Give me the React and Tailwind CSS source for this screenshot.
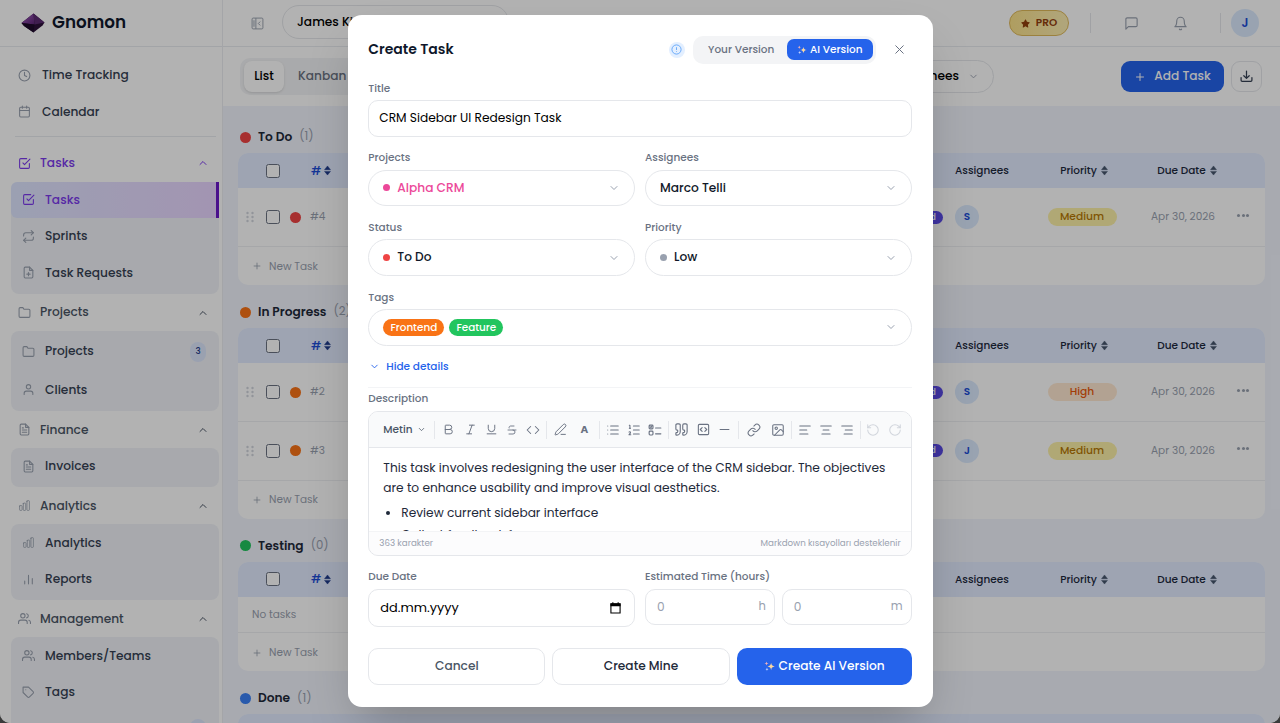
import React from "react";
import {
  FiBell,
  FiCalendar,
  FiCheckSquare,
  FiChevronDown,
  FiChevronUp,
  FiClock,
  FiFilePlus,
  FiFileText,
  FiFolder,
  FiMessageSquare,
  FiPlus,
  FiRepeat,
  FiTag,
  FiUser,
  FiUsers,
  FiX,
} from "react-icons/fi";
import { FaStar } from "react-icons/fa";
import { HiOutlineChartBar } from "react-icons/hi2";
import {
  Bold,
  Code,
  Image as ImageIcon,
  Italic,
  Link as LinkIcon,
  List,
  ListOrdered,
  Minus,
  PenLine,
  Quote,
  RotateCcw,
  RotateCw,
  Strikethrough,
  TextAlignCenter,
  TextAlignEnd,
  TextAlignStart,
  Underline,
} from "lucide-react";

const Logo = () => (
  <svg viewBox="0 0 24 20" className="w-6 h-5">
    <defs>
      <linearGradient id="gem" x1="0" y1="0" x2="1" y2="1">
        <stop offset="0" stopColor="#a55fc4" />
        <stop offset="1" stopColor="#5a2473" />
      </linearGradient>
    </defs>
    <path d="M12.500.5 23.500 9.500 21.500 12.500 12.500 19.500 3 13 .5 10Z" fill="#2c1038" />
    <path d="M12.500.5 13.500 11.500.5 10Z" fill="url(#gem)" />
    <path d="M12.500.5 23.500 9.500 13.500 11.500Z" fill="#5b2a72" />
    <path d="M.5 10 13.500 11.500 12.500 19.500 3 13Z" fill="#1d0b2a" />
  </svg>
);

const ReportsIcon = ({ className }) => (
  <svg viewBox="0 0 24 24" fill="none" stroke="currentColor" strokeWidth="2" strokeLinecap="round" className={className}>
    <path d="M5 20v-5M12 20V4M19 20V10" />
  </svg>
);

const Sparkles = ({ className }) => (
  <svg viewBox="0 0 24 24" className={className}>
    <path d="M15.500 4c.8 5.300 2.400 7.100 8 8-5.600.9-7.200 2.700-8 8-.8-5.300-2.400-7.100-8-8 5.600-.9 7.200-2.700 8-8Z" fill="#fcd9a0" />
    <path d="M5.500 1c.5 3 1.500 4 4.500 4.500C7 6 6 7 5.500 10 5 7 4 6 1 5.500 4 5 5 4 5.500 1Z" fill="#f3b2b8" />
    <path d="M6.500 14c.4 2.800 1.200 3.700 4 4.200-2.800.5-3.600 1.400-4 4.200-.4-2.800-1.200-3.700-4-4.200 2.800-.5 3.600-1.400 4-4.200Z" fill="#c4d4ff" />
  </svg>
);

const SortIcon = ({ className }) => (
  <svg viewBox="0 0 8 12" className={`w-[7px] h-[11px] ${className}`} fill="currentColor">
    <path d="M4 .8 7.400 5H.6ZM4 11.200.6 7h6.800Z" stroke="currentColor" strokeWidth=".5" strokeLinejoin="round" />
  </svg>
);

const PanelIcon = () => (
  <svg viewBox="0 0 24 24" className="w-[13px] h-[13px] text-gray-400" fill="none" stroke="currentColor" strokeWidth="1.800">
    <rect x="2" y="2" width="20" height="20" rx="2" />
    <path d="M9 2v20M5.500 6v12M17 8.500 13.500 12l3.500 3.500" />
  </svg>
);

const DownloadIcon = () => (
  <svg viewBox="0 0 24 24" className="w-[13px] h-[13px] text-gray-700" fill="none" stroke="currentColor" strokeWidth="2.300" strokeLinecap="round" strokeLinejoin="round">
    <path d="M2 14v5a2 2 0 0 0 2 2h16a2 2 0 0 0 2-2v-5M12 2v13M7 10.500l5 5 5-5" />
  </svg>
);

const TaskListIcon = ({ className }) => (
  <svg viewBox="0 0 24 24" className={className} fill="none" stroke="currentColor" strokeWidth="2" strokeLinecap="round">
    <rect x="2" y="3.500" width="6.500" height="6.500" rx="1.500" />
    <rect x="2" y="14" width="6.500" height="6.500" rx="1.500" />
    <path d="m4 6.700 1 1 1.500-2M13 8.500h9M13 18.500h9" />
  </svg>
);

const CodeBlockIcon = ({ className }) => (
  <svg viewBox="0 0 24 24" className={className} fill="none" stroke="currentColor" strokeWidth="2" strokeLinecap="round" strokeLinejoin="round">
    <rect x="2.500" y="2.500" width="19" height="19" rx="2" />
    <path d="m9.500 8.500-3.500 3.500 3.500 3.500M14.500 8.500l3.500 3.500-3.500 3.500" />
  </svg>
);

const CalendarGlyph = () => (
  <svg viewBox="0 0 12 13" className="w-[11px] h-3">
    <path d="M1 2h10v10H1Z" fill="none" stroke="#000" strokeWidth="1.200" />
    <path d="M.5 1.500h11V4.500H.5ZM2.500.3h1.200v2H2.500ZM8.300.3h1.200v2H8.300Z" fill="#000" />
  </svg>
);

const NavItem = ({ icon: Icon, label, badge, active, tall }) => (
  <div
    className={`flex items-center pl-[11px] pr-[13px] shrink-0 ${tall ? "h-[38.300px]" : "h-[36.600px]"} ${
      active
        ? "bg-linear-to-r from-[#dfe6ff] to-[#e9d5ff] border-r-[3px] border-[#6a18c9] text-[#7c3aed] rounded-tl-md rounded-bl-md"
        : "text-gray-700"
    }`}
  >
    <Icon className={`w-[13px] h-[13px] mr-[10px] ${active ? "" : "text-gray-400"}`} />
    <span className="text-[12.200px] font-medium">{label}</span>
    {badge && (
      <span className="ml-auto w-4 h-5 rounded-full bg-[#dde7fd] text-[#1e3a8a] text-[8.700px] font-medium flex items-center justify-center">
        {badge}
      </span>
    )}
  </div>
);

const NavGroup = ({ icon: Icon, label, active, children }) => (
  <div className="shrink-0">
    <div className={`h-[37px] pl-[18px] pr-[13px] flex items-center ${active ? "text-[#7c3aed]" : "text-gray-600"}`}>
      <Icon className={`w-[13px] h-[13px] mr-[9px] ${active ? "" : "text-gray-400"}`} />
      <span className="text-[12.200px] font-medium">{label}</span>
      <FiChevronUp className="w-3 h-3 ml-auto" />
    </div>
    <div className="ml-[11px] mr-[3px] rounded-lg bg-[#f1f3f8]">{children}</div>
  </div>
);

const Sidebar = () => (
  <aside className="w-[223px] shrink-0 border-r border-[#ebedf1] bg-white flex flex-col">
    <div className="h-[47px] shrink-0 border-b border-[#e9ebef] flex items-center pl-[21px]">
      <Logo />
      <span className="ml-[7px] text-[16.800px] font-semibold text-slate-900">Gnomon</span>
    </div>
    <div className="pt-[10px] flex flex-col shrink-0">
      <div className="h-[36.500px] pl-[18px] flex items-center text-gray-700">
        <FiClock className="w-[13px] h-[13px] text-gray-400 mr-[11px]" />
        <span className="text-[12.200px] font-medium">Time Tracking</span>
      </div>
      <div className="h-[36.500px] pl-[18px] flex items-center text-gray-700">
        <FiCalendar className="w-[13px] h-[13px] text-gray-400 mr-[11px]" />
        <span className="text-[12.200px] font-medium">Calendar</span>
      </div>
      <div className="h-px bg-[#e9ebef] ml-[15px] mr-[6px] mt-[6px] mb-[7.500px]" />
      <NavGroup icon={FiCheckSquare} label="Tasks" active>
        <NavItem icon={FiCheckSquare} label="Tasks" active />
        <NavItem icon={FiRepeat} label="Sprints" />
        <NavItem icon={FiFilePlus} label="Task Requests" />
        <div className="h-[2.800px]" />
      </NavGroup>
      <NavGroup icon={FiFolder} label="Projects">
        <div className="h-[1.300px]" />
        <NavItem icon={FiFolder} label="Projects" badge="3" tall />
        <NavItem icon={FiUser} label="Clients" tall />
        <div className="h-[2.200px]" />
      </NavGroup>
      <NavGroup icon={FiFileText} label="Finance">
        <NavItem icon={FiFileText} label="Invoices" />
        <div className="h-[2.700px]" />
      </NavGroup>
      <NavGroup icon={HiOutlineChartBar} label="Analytics">
        <NavItem icon={HiOutlineChartBar} label="Analytics" />
        <NavItem icon={ReportsIcon} label="Reports" />
        <div className="h-[2.800px]" />
      </NavGroup>
      <NavGroup icon={FiUsers} label="Management">
        <NavItem icon={FiUsers} label="Members/Teams" />
        <NavItem icon={FiTag} label="Tags" />
        <NavItem icon={FiUsers} label="Roles" badge="2" />
      </NavGroup>
    </div>
  </aside>
);

const ROW = "grid grid-cols-[24px_21px_24px_648px_63px_128px_82px_30px] items-center";

const Checkbox = () => <span className="w-[14px] h-[14px] rounded-[2.500px] border border-gray-500 bg-white justify-self-center" />;

const GROUPS = [
  { name: "To Do", dot: "bg-[#ef4444]", tasks: [{ id: 4, user: "S", priority: "Medium" }] },
  {
    name: "In Progress",
    dot: "bg-[#f97316]",
    tasks: [
      { id: 2, user: "S", priority: "High" },
      { id: 3, user: "J", priority: "Medium" },
    ],
  },
  { name: "Testing", dot: "bg-[#22c55e]", tasks: [] },
  { name: "Done", dot: "bg-[#3b82f6]", tasks: [{ id: 1, user: "J", priority: "Low" }] },
];

const TaskGroup = ({ group }) => (
  <section className="mb-[10px] shrink-0">
    <div className="h-[33px] pt-px flex items-center pl-[2px]">
      <span className={`w-[11px] h-[11px] rounded-full mr-[7px] ${group.dot}`} />
      <span className="text-[12.200px] font-semibold text-gray-800">{group.name}</span>
      <span className="ml-[7px] text-[11.700px] text-gray-400">({group.tasks.length})</span>
    </div>
    <div className="rounded-[10px] bg-white overflow-hidden">
      <div className={`${ROW} h-[35.200px] bg-[#e2ebff] text-[10.500px] font-medium text-slate-800`}>
        <span />
        <Checkbox />
        <span />
        <span className="flex items-center pl-1 text-[#1d4ed8]">
          <span className="text-[12px]">#</span> <SortIcon className="ml-[3px] text-[#1e3a8a]" />
        </span>
        <span>Assignees</span>
        <span className="flex items-center justify-center pl-1">
          Priority <SortIcon className="ml-1 text-slate-600" />
        </span>
        <span className="flex items-center justify-center whitespace-nowrap">
          Due Date <SortIcon className="ml-1 text-slate-600" />
        </span>
        <span />
      </div>
      {group.tasks.map((task) => (
        <div key={task.id} className={`${ROW} h-[58.700px] border-b border-[#eef0f3]`}>
          <svg viewBox="0 0 8 12" className="w-2 h-3 ml-[8px] text-gray-300" fill="currentColor">
            {[2, 6, 10].map((y) => (
              <React.Fragment key={y}>
                <circle cx="1.500" cy={y} r="1.200" />
                <circle cx="6.500" cy={y} r="1.200" />
              </React.Fragment>
            ))}
          </svg>
          <Checkbox />
          <span className={`w-[11px] h-[11px] rounded-full justify-self-center ${group.dot}`} />
          <span className="flex items-center justify-between pl-[3px] pr-3">
            <span className="text-[10.500px] text-gray-400">#{task.id}</span>
            <span className="h-[13px] w-16 rounded-full bg-[#5b4be8] text-white text-[8.700px] font-medium flex items-center justify-end pr-[7px]">
              Backend
            </span>
          </span>
          <span className="w-6 h-6 rounded-full bg-[#dbeafe] text-[#1d4ed8] text-[10.500px] font-semibold flex items-center justify-center">
            {task.user}
          </span>
          <span
            className={`justify-self-center w-[69px] h-[18px] rounded-full text-[10.700px] font-medium flex items-center justify-center ${
              task.priority === "High" ? "bg-[#ffe9d2] text-[#ea580c]" : "bg-[#fdf1a8] text-[#b77905]"
            }`}
          >
            {task.priority}
          </span>
          <span className="justify-self-center pr-2 text-[10.500px] text-gray-400 whitespace-nowrap">Apr 30, 2026</span>
          <span className="justify-self-center flex gap-[1.500px] -mt-1">
            <i className="w-[3px] h-[3px] rounded-full bg-gray-400" />
            <i className="w-[3px] h-[3px] rounded-full bg-gray-400" />
            <i className="w-[3px] h-[3px] rounded-full bg-gray-400" />
          </span>
        </div>
      ))}
      {group.tasks.length === 0 && (
        <div className="h-[36.300px] border-b border-[#eef0f3] flex items-center pl-[14px] text-[10.500px] text-gray-400">No tasks</div>
      )}
      <div className="h-[38.200px] pt-px flex items-center pl-[14px] text-[10.500px] text-gray-400">
        <FiPlus className="w-[10px] h-[10px] mr-[7px]" />
        New Task
      </div>
    </div>
  </section>
);

const TopBar = () => (
  <header className="h-[47px] shrink-0 border-b border-[#e9ebef] flex items-center pl-[28px] pr-[21px]">
    <PanelIcon />
    <div className="ml-[18px] w-[227px] h-[34px] mb-[2px] rounded-full border border-gray-200 flex items-center px-[14px] text-[12.200px] font-medium text-black">
      James Kim
    </div>
    <div className="ml-auto flex items-center">
      <div className="w-[60px] h-[26px] rounded-full border border-[#dfb95a] bg-linear-to-r from-[#fbe28a] to-[#fdeeb2] flex items-center justify-center gap-[6px] text-[#92400e]">
        <FaStar className="w-[9px] h-[9px]" />
        <span className="text-[10.500px] font-semibold">PRO</span>
      </div>
      <span className="w-px h-5 bg-gray-200 ml-[21px]" />
      <FiMessageSquare className="w-[15px] h-[15px] text-gray-400 ml-[33px]" strokeWidth={1.8} />
      <FiBell className="w-[15px] h-[15px] text-gray-400 ml-[34px]" strokeWidth={1.8} />
      <span className="w-px h-5 bg-gray-200 ml-[32px]" />
      <span className="ml-[10px] w-7 h-7 rounded-full bg-[#dbeafe] text-[#1d4ed8] text-[12.200px] font-semibold flex items-center justify-center">
        J
      </span>
    </div>
  </header>
);

const FilterBar = () => (
  <div className="h-[59px] shrink-0 flex items-center pl-[17px] pr-[18px]">
    <div className="h-[37px] w-[190px] rounded-[10px] bg-gray-100 p-1 flex items-center text-[12.200px] font-medium">
      <span className="w-10 h-[31px] rounded-lg bg-white shadow-sm text-black flex items-center justify-center">List</span>
      <span className="ml-[14px] text-gray-500">Kanban</span>
    </div>
    <div className="ml-[434px] w-[130px] h-[33px] rounded-full border border-gray-200 flex items-center justify-end pr-[14px] text-[12.200px] font-medium text-black">
      Assignees
      <FiChevronDown className="w-[11px] h-[11px] ml-[9px] text-gray-400" />
    </div>
    <div className="ml-auto w-[103px] h-[31px] rounded-[9px] bg-[#2563eb] text-white text-[12.200px] font-medium flex items-center justify-center gap-2 whitespace-nowrap">
      <FiPlus className="w-3 h-3" />
      Add Task
    </div>
    <div className="ml-[7px] w-[31px] h-[31px] rounded-[9px] border border-gray-200 flex items-center justify-center">
      <DownloadIcon />
    </div>
  </div>
);

const Label = ({ children }) => (
  <div className="h-[18px] pt-px mb-[3px] flex items-center text-[10.500px] font-medium text-gray-500">{children}</div>
);

const Select = ({ label, children }) => (
  <div className="flex-1">
    <Label>{label}</Label>
    <div className="h-[36.500px] rounded-full border border-gray-200 flex items-center px-[14px] text-[12.200px] font-medium text-gray-900">
      {children}
      <FiChevronDown className="w-3 h-3 ml-auto text-gray-400" />
    </div>
  </div>
);

const Dot = ({ className }) => <span className={`w-[7px] h-[7px] rounded-full mr-[7px] ${className}`} />;

const Separator = () => <span className="w-px h-[18px] bg-gray-200 shrink-0" />;

const Toolbar = () => (
  <div className="h-[35.500px] shrink-0 bg-gray-50 border-b border-gray-200 flex items-center pl-[14px] pr-[9px] text-gray-500">
    <div className="w-[51px] flex items-center text-[10.500px] font-medium text-gray-600">
      Metin
      <FiChevronDown className="w-[9px] h-[9px] ml-[4px]" />
    </div>
    <Separator />
    <div className="w-[111px] pl-[7px] pr-[6px] flex items-center justify-between">
      <Bold className="w-[13px] h-[13px]" strokeWidth={1.8} />
      <Italic className="w-[13px] h-[13px]" strokeWidth={1.8} />
      <Underline className="w-[13px] h-[13px]" strokeWidth={1.8} />
      <Strikethrough className="w-[12px] h-[12px]" strokeWidth={1.8} />
      <Code className="w-[14px] h-[14px]" strokeWidth={1.8} />
    </div>
    <Separator />
    <div className="w-[52px] pl-[7px] pr-[11px] flex items-center justify-between">
      <PenLine className="w-[13px] h-[13px]" strokeWidth={1.8} />
      <span className="text-[10.500px] font-bold">A</span>
    </div>
    <Separator />
    <div className="w-[68px] pl-[6px] pr-[6px] flex items-center justify-between">
      <List className="w-[14px] h-[14px]" strokeWidth={1.8} />
      <ListOrdered className="w-[14px] h-[14px]" strokeWidth={1.8} />
      <TaskListIcon className="w-[14px] h-[14px]" />
    </div>
    <Separator />
    <div className="w-[69px] pl-[5px] pr-[6px] flex items-center justify-between">
      <Quote className="w-[15px] h-[15px]" strokeWidth={1.8} />
      <CodeBlockIcon className="w-[13px] h-[13px]" />
      <Minus className="w-[15px] h-[15px]" strokeWidth={1.8} />
    </div>
    <Separator />
    <div className="w-[52px] pl-[8px] pr-[6px] flex items-center justify-between">
      <LinkIcon className="w-[14px] h-[14px]" strokeWidth={1.8} />
      <ImageIcon className="w-[14px] h-[14px]" strokeWidth={1.8} />
    </div>
    <Separator />
    <div className="w-[68px] px-[6px] flex items-center justify-between">
      <TextAlignStart className="w-[14px] h-[14px]" strokeWidth={1.8} />
      <TextAlignCenter className="w-[14px] h-[14px]" strokeWidth={1.8} />
      <TextAlignEnd className="w-[14px] h-[14px]" strokeWidth={1.8} />
    </div>
    <Separator />
    <div className="flex-1 pl-[5px] flex items-center justify-between text-gray-300">
      <RotateCcw className="w-[14px] h-[14px]" strokeWidth={1.8} />
      <RotateCw className="w-[14px] h-[14px]" strokeWidth={1.8} />
    </div>
  </div>
);

const CreateTaskModal = () => (
  <div className="w-[585px] h-[691.500px] rounded-[14px] bg-white shadow-2xl px-[20.800px] flex flex-col">
    <div className="h-[64px] pt-[5px] shrink-0 flex items-center">
      <h2 className="text-[14px] font-semibold text-slate-900">Create Task</h2>
      <span className="ml-auto w-4 h-4 rounded-full bg-[#e3efff] flex items-center justify-center">
        <svg viewBox="0 0 24 24" className="w-[11px] h-[11px] text-[#60a5fa]" fill="none" stroke="currentColor" strokeWidth="2">
          <circle cx="12" cy="12" r="10" />
          <path d="M12 7v6M12 15.500v1.500" />
        </svg>
      </span>
      <div className="ml-2 w-[183px] h-7 rounded-[10px] bg-gray-100 p-[3px] flex items-center text-[10.500px] font-medium">
        <span className="w-[91px] text-center text-gray-500 whitespace-nowrap">Your Version</span>
        <span className="w-[86px] h-[21px] rounded-[7px] bg-[#2563eb] text-white flex items-center justify-center gap-[3px] whitespace-nowrap">
          <Sparkles className="w-[10px] h-[10px]" />
          AI Version
        </span>
      </div>
      <FiX className="w-[15px] h-[15px] ml-[16px] mr-[5px] text-gray-500" strokeWidth={1.6} />
    </div>

    <div className="flex flex-col gap-[12.200px] shrink-0">
      <div>
        <Label>Title</Label>
        <div className="h-[36.500px] rounded-[10px] border border-gray-200 flex items-center px-[10px] text-[12.200px] text-black">
          CRM Sidebar UI Redesign Task
        </div>
      </div>
      <div className="flex gap-[10px]">
        <Select label="Projects">
          <Dot className="bg-[#ec4899]" />
          <span className="text-[#ec4899]">Alpha CRM</span>
        </Select>
        <Select label="Assignees">Marco Telli</Select>
      </div>
      <div className="flex gap-[10px]">
        <Select label="Status">
          <Dot className="bg-[#ef4444]" />
          To Do
        </Select>
        <Select label="Priority">
          <Dot className="bg-gray-400" />
          Low
        </Select>
      </div>
      <Select label="Tags">
        <span className="h-[17px] w-[61px] rounded-full bg-[#f97316] text-white text-[10.400px] flex items-center justify-center">
          Frontend
        </span>
        <span className="ml-[5px] h-[17px] w-[54px] rounded-full bg-[#22c55e] text-white text-[10.400px] flex items-center justify-center">
          Feature
        </span>
      </Select>
    </div>

    <div className="h-[18px] mt-[12.200px] shrink-0 flex items-center text-[10.500px] font-medium text-[#2563eb]">
      <FiChevronDown className="w-[11px] h-[11px] ml-[1px] mr-[6px]" />
      Hide details
    </div>
    <div className="h-px bg-gray-100 mt-[11.500px] mb-[1.500px] shrink-0" />

    <Label>Description</Label>
    <div className="h-[145px] mt-[0.500px] shrink-0 rounded-[10px] border border-gray-200 overflow-hidden flex flex-col">
      <Toolbar />
      <div className="flex-1 overflow-hidden px-[14px] pt-[10px] text-[12.200px] leading-5 text-gray-800">
        <p className="whitespace-nowrap">This task involves redesigning the user interface of the CRM sidebar. The objectives</p>
        <p className="whitespace-nowrap">are to enhance usability and improve visual aesthetics.</p>
        <ul className="mt-[5px] list-disc pl-[18px]">
          <li>Review current sidebar interface</li>
          <li className="mt-[2px]">Collect feedback from users</li>
        </ul>
      </div>
      <div className="h-[24.500px] pt-px shrink-0 bg-gray-50/50 border-t border-gray-100 px-[10px] flex items-center justify-between text-[8.700px] text-gray-400">
        <span>363 karakter</span>
        <span>Markdown kısayolları desteklenir</span>
      </div>
    </div>

    <div className="mt-[11.500px] flex gap-[10px]">
      <div className="flex-1">
        <Label>Due Date</Label>
        <div className="h-[38.500px] rounded-[10px] border border-gray-200 flex items-center justify-between pl-[11px] pr-[13px] text-[12.900px] text-black">
          dd.mm.yyyy
          <CalendarGlyph />
        </div>
      </div>
      <div className="flex-1">
        <Label>Estimated Time (hours)</Label>
        <div className="flex gap-[7px]">
          {["h", "m"].map((unit) => (
            <div
              key={unit}
              className="flex-1 h-[36.500px] rounded-[10px] border border-gray-200 flex items-center justify-between pl-[11px] pr-2 text-[12.200px] text-gray-400"
            >
              0<span className="text-[11.500px]">{unit}</span>
            </div>
          ))}
        </div>
      </div>
    </div>

    <div className="mt-[21px] flex gap-[7px] text-[12.200px] font-medium">
      <button className="flex-1 h-[36.500px] rounded-[10px] border border-gray-200 text-gray-600">Cancel</button>
      <button className="flex-1 h-[36.500px] rounded-[10px] border border-gray-200 text-gray-800">Create Mine</button>
      <button className="flex-1 h-[36.500px] rounded-[10px] bg-[#2563eb] text-white flex items-center justify-center gap-1 whitespace-nowrap">
        <Sparkles className="w-[11px] h-[11px]" />
        Create AI Version
      </button>
    </div>
  </div>
);

const App = () => (
  <div className="relative w-[1280px] h-[723px] overflow-hidden bg-[#555] font-['Poppins','Inter',sans-serif]">
    <div className="w-full h-full flex bg-white rounded-b-[10px] overflow-hidden">
      <Sidebar />
      <div className="flex-1 flex flex-col min-w-0">
        <TopBar />
        <FilterBar />
        <main className="flex-1 overflow-hidden bg-[#f1f4fd] pt-[14px] pl-[15px] pr-[15px] flex flex-col">
          {GROUPS.map((group) => (
            <TaskGroup key={group.name} group={group} />
          ))}
        </main>
      </div>
    </div>
    <div className="absolute inset-0 bg-black/30 flex justify-center pt-[15px]">
      <CreateTaskModal />
    </div>
  </div>
);

export default App;
